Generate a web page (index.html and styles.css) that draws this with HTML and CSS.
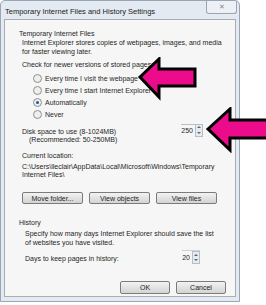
FILE: index.html
```html
<!DOCTYPE html>
<html lang="en">
<head>
  <meta charset="UTF-8" />
  <title>Temporary Internet Files and History Settings</title>
  <link rel="stylesheet" href="styles.css">
</head>
<body>
  <div class="window">
    <div class="titlebar">
      <span class="title">Temporary Internet Files and History Settings</span>
      <span class="close">&#x2715;</span>
    </div>
    <div class="client">
      <div class="group-title">Temporary Internet Files</div>
      <p class="text">Internet Explorer stores copies of webpages, images, and media<br/>for faster viewing later.</p>
      <p class="text check">Check for newer versions of stored pages:</p>
      <div class="radios">
        <label class="radio"><span class="dot"></span>Every time I visit the webpage</label>
        <label class="radio"><span class="dot"></span>Every time I start Internet Explorer</label>
        <label class="radio"><span class="dot on"></span>Automatically</label>
        <label class="radio"><span class="dot"></span>Never</label>
      </div>
      <div class="row disk">
        <p class="text">Disk space to use (8-1024MB)<br/><span class="rec">(Recommended: 50-250MB)</span></p>
        <div class="spin"><span class="val">250</span><span class="arrows"><i class="up"></i><i class="down"></i></span></div>
      </div>
      <p class="text loc-title">Current location:</p>
      <p class="text path">C:\Users\lleclair\AppData\Local\Microsoft\Windows\Temporary<br/>Internet Files\</p>
      <div class="buttons">
        <button>Move folder...</button>
        <button>View objects</button>
        <button>View files</button>
      </div>
      <div class="group-title history">History</div>
      <p class="text indent">Specify how many days Internet Explorer should save the list<br/>of websites you have visited.</p>
      <div class="row days">
        <p class="text">Days to keep pages in history:</p>
        <div class="spin small"><span class="val">20</span><span class="arrows"><i class="up"></i><i class="down"></i></span></div>
      </div>
      <div class="footer">
        <button class="wide">OK</button>
        <button class="wide">Cancel</button>
      </div>
    </div>
  </div>

  <svg class="arrow arrow-1" width="62" height="44" viewBox="0 0 62 44">
    <polygon points="3,20 22,2 22,12 58,12 58,29 22,29 22,40" />
  </svg>
  <svg class="arrow arrow-2" width="64" height="46" viewBox="0 0 64 46">
    <polygon points="3,22 25,2 25,13 70,13 70,31 25,31 25,43" />
  </svg>
</body>
</html>
```

FILE: styles.css
```css
body {
  margin: 0;
  background: #fff;
  font-family: "Liberation Sans", Arial, sans-serif;
  font-size: 7px;
  color: #1e1e1e;
  position: relative;
}
.window {
  width: 238px;
  height: 300px;
  border: 1px solid #9aa6b3;
  border-radius: 5px 5px 0 0;
  background: #e3eaf1;
  display: flex;
  flex-direction: column;
}
.titlebar {
  height: 18px;
  display: flex;
  justify-content: space-between;
  align-items: flex-start;
}
.title {
  font-size: 7.5px;
  margin: 6px 0 0 4px;
  color: #222;
}
.close {
  width: 29px;
  height: 12px;
  border: 1px solid #9ca6b2;
  border-top: none;
  border-radius: 0 0 3px 3px;
  margin-right: 2px;
  background: #edf1f5;
  color: #7d8894;
  font-size: 7px;
  text-align: center;
  line-height: 12px;
}
.client {
  flex: 1;
  margin: 0 3px 4px 3px;
  border: 1px solid #a8adb3;
  background: #f6f6f6;
  padding: 9px 0 0 14px;
}
.text {
  margin: 0;
  line-height: 8.5px;
}
.group-title {
  line-height: 9px;
  margin-bottom: 1px;
}
.client > .text, .client > .row, .client > .buttons {
  margin-left: 3px;
}
.check {
  margin-top: 5px;
}
.radios {
  margin: 4px 0 0 14px;
  display: flex;
  flex-direction: column;
  gap: 3px;
}
.radio {
  display: flex;
  align-items: center;
  gap: 3px;
  height: 9px;
  color: #2a2a2a;
}
.dot {
  width: 7px;
  height: 7px;
  border: 1px solid #8e8f8f;
  border-radius: 50%;
  background: #eeeeee;
  position: relative;
}
.dot.on::after {
  content: "";
  position: absolute;
  left: 2px;
  top: 2px;
  width: 3px;
  height: 3px;
  border-radius: 50%;
  background: #1c5c9a;
}
.row {
  display: flex;
  justify-content: space-between;
  align-items: flex-start;
  width: 181px;
}
.disk {
  margin-top: 9px;
}
.rec {
  padding-left: 7px;
}
.spin {
  display: flex;
  align-items: center;
  margin-top: -4px;
  border-top: 1px solid #b9c0c7;
  height: 11px;
}
.spin .val {
  padding-right: 2px;
}
.spin.small {
  border-top: 1px solid #d0d0d0;
  margin-top: -5px;
  height: 13px;
}
.arrows {
  width: 6px;
  height: 11px;
  border: 1px solid #b8bec5;
  background: #e8ebee;
  display: flex;
  flex-direction: column;
  align-items: center;
  justify-content: space-around;
}
.up, .down {
  width: 0;
  height: 0;
  border-left: 2px solid transparent;
  border-right: 2px solid transparent;
}
.up {
  border-bottom: 2px solid #5c6670;
}
.down {
  border-top: 2px solid #5c6670;
}
.loc-title {
  margin-top: 7px;
}
.path {
  margin-top: 3px;
  line-height: 7.5px;
}
.buttons {
  display: flex;
  gap: 6px;
  margin-top: 14px;
}
button {
  font-family: "Liberation Sans", Arial, sans-serif;
  font-size: 7px;
  color: #1e1e1e;
  width: 61px;
  height: 12px;
  padding: 0;
  border: 1px solid #7b7b7b;
  border-radius: 2px;
  background: linear-gradient(#f3f3f3, #e2e2e2 50%, #d4d4d4);
}
.history {
  margin-top: 14px;
}
.indent {
  margin: 3px 0 0 6px !important;
}
.days {
  margin: 8px 0 0 6px !important;
  width: 175px;
}
.footer {
  display: flex;
  justify-content: flex-end;
  gap: 6px;
  margin: 17px 9px 0 0;
}
button.wide {
  width: 50px;
  height: 13px;
}
.arrow {
  position: absolute;
}
.arrow polygon {
  fill: #ec0b8b;
  stroke: #000;
  stroke-width: 3;
  stroke-linejoin: miter;
}
.arrow-1 {
  left: 137px;
  top: 57px;
}
.arrow-2 {
  left: 205px;
  top: 107px;
}
```
